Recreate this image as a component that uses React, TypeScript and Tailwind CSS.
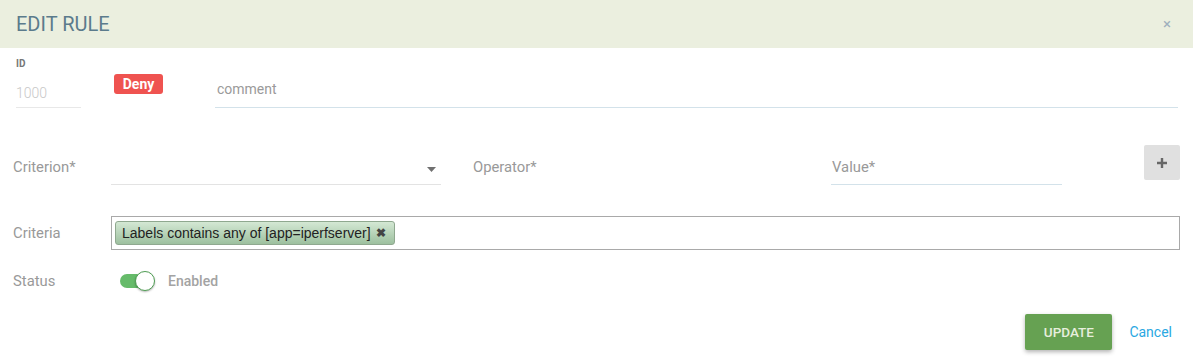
import React from "react";

const Label: React.FC<{ children: React.ReactNode; className?: string }> = ({ children, className = "" }) => (
  <div className={`w-[98px] shrink-0 text-[14.8px] leading-[20px] text-[#999] ${className}`}>{children}</div>
);

const EditRuleDialog: React.FC = () => {
  return (
    <div className="w-[1193px] h-[358px] bg-white overflow-hidden font-['Roboto',sans-serif]">
      {/* header */}
      <div className="h-[48px] bg-[#ebefdf] px-4 flex items-center justify-between">
        <h2 className="text-[20px] font-normal text-[#5b7b8c]">EDIT RULE</h2>
        <button className="mr-[6px] text-[#9fb0bd] text-[15px] leading-none">×</button>
      </div>

      <div className="px-[13px]">
        {/* id / action / comment */}
        <div className="flex items-start">
          <div className="ml-[3px] w-[65px] mt-[10px]">
            <div className="text-[10px] leading-[12px] font-bold text-[#777]">ID</div>
            <div className="h-[38px] flex items-end pb-[4px] border-b border-[#e8e8e8]">
              <span className="text-[14px] leading-[20px] font-light text-[#c8c8c8]">1000</span>
            </div>
          </div>
          <div className="ml-[33px] mt-[26px] w-[49px] h-[20px] rounded-[3px] bg-[#ef5350] flex items-center justify-center text-white text-[14px] font-bold">
            Deny
          </div>
          <div className="ml-[52px] mr-[2px] mt-[31px] flex-1 pb-[8px] border-b border-[#d3e2ea] text-[14px] leading-[20px] text-[#9a9a9a] pl-[2px]">
            comment
          </div>
        </div>

        {/* criterion / operator / value */}
        <div className="mt-[32px] flex items-start h-[45px]">
          <Label className="mt-[17px]">Criterion*</Label>
          <div className="w-[330px] h-[45px] border-b border-[#e3e3e3] flex items-end justify-end pb-[12px] pr-[5px]">
            <svg width="9" height="5" viewBox="0 0 9 5">
              <path d="M0 0 L9 0 L4.5 5 Z" fill="#707070" />
            </svg>
          </div>
          <div className="ml-[32px] w-[358px] mt-[17px] text-[14.8px] leading-[20px] text-[#999]">Operator*</div>
          <div className="w-[231px] h-[45px] border-b border-[#d3e2ea] pt-[17px] pl-[1px] text-[14.8px] leading-[20px] text-[#999]">
            Value*
          </div>
          <button className="ml-auto mt-[5px] w-[36px] h-[35px] rounded-[2px] bg-[#e0e0e0] flex items-center justify-center">
            <svg width="10" height="10" viewBox="0 0 10 10">
              <path d="M3.8 0h2.4v3.8H10v2.4H6.2V10H3.8V6.2H0V3.8h3.8z" fill="#676767" />
            </svg>
          </button>
        </div>

        {/* criteria */}
        <div className="mt-[31px] flex items-center">
          <Label>Criteria</Label>
          <div className="flex-1 h-[34px] border border-[#a9a9a9] px-[3px] py-[4px] flex">
            <div className="h-[24px] w-[280px] rounded-[3px] border border-[#8fa88f] bg-gradient-to-b from-[#d4e8d4] to-[#9dc09f] flex items-center pl-[6px] pr-[8px] justify-between font-['Liberation_Sans',Arial,sans-serif] text-[14px] text-[#222]">
              <span>Labels contains any of [app=iperfserver]</span>
              <span className="text-[12px] font-bold text-[#444]">✖</span>
            </div>
          </div>
        </div>

        {/* status */}
        <div className="mt-[20px] flex items-center h-[22px]">
          <Label>Status</Label>
          <div className="ml-[9px] relative w-[36px] h-[22px] flex items-center">
            <div className="w-[30px] h-[14px] rounded-full bg-[#66bb6a]" />
            <div className="absolute left-[15px] top-[1px] w-[20px] h-[20px] rounded-full bg-white border-[1.5px] border-[#4f9e53] shadow-[0_1px_2px_rgba(0,0,0,0.3)]" />
          </div>
          <span className="ml-[12px] text-[14px] font-medium text-[#a3a3a3]">Enabled</span>
        </div>

        {/* footer */}
        <div className="mt-[22px] flex justify-end items-center">
          <button className="w-[87px] h-[36px] rounded-[2px] bg-[#66a152] text-[#e6eedd] text-[13.5px] font-medium shadow-[0_2px_4px_rgba(0,0,0,0.3)]">
            UPDATE
          </button>
          <button className="ml-[9px] px-[8px] text-[14px] text-[#2aa8e2]">Cancel</button>
        </div>
      </div>
    </div>
  );
};

export default function App() {
  return <EditRuleDialog />;
}
